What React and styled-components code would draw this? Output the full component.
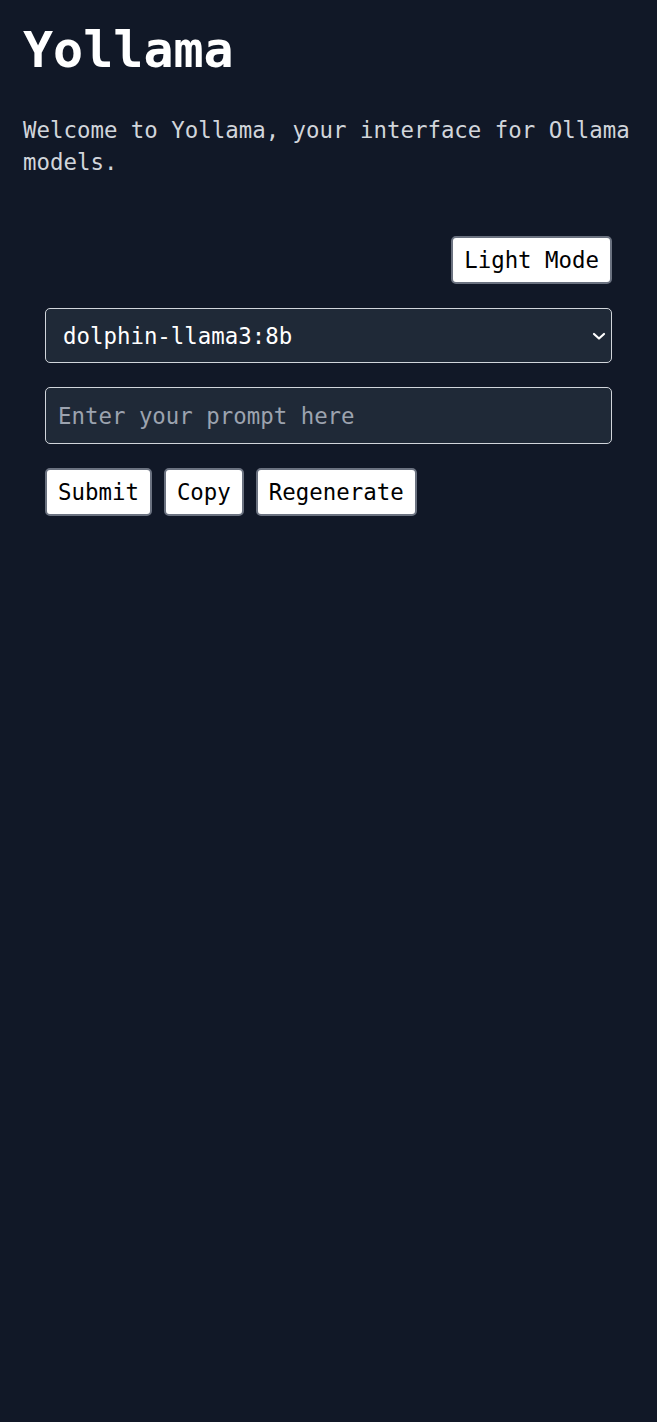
import styled, { createGlobalStyle } from "styled-components";
import { useState } from "react";

const GlobalStyle = createGlobalStyle`
  html, body {
    margin: 0;
    padding: 0;
    background-color: #111827;
  }
  body {
    font-family: 'DejaVu Sans Mono', 'Liberation Mono', monospace;
    color: #ffffff;
    min-height: 100vh;
  }
`;

const Page = styled.div`
  padding: 0 23px;
  min-height: 1422px;
  box-sizing: border-box;
`;

const Title = styled.h1`
  font-size: 50px;
  font-weight: bold;
  margin: 0;
  padding-top: 22px;
  line-height: 56px;
  color: #ffffff;
`;

const Intro = styled.p`
  font-size: 22.4px;
  line-height: 32px;
  color: #d1d5db;
  margin: 36px 0 0;
`;

const Panel = styled.div`
  display: flex;
  flex-direction: column;
  gap: 24px;
  margin: 58px 22px 0 22px;
`;

const TopBar = styled.div`
  display: flex;
  justify-content: flex-end;
`;

const Button = styled.button`
  font-family: 'DejaVu Sans Mono', 'Liberation Mono', monospace;
  font-size: 22.4px;
  height: 48px;
  padding: 0 11px;
  background-color: #ffffff;
  color: #000000;
  border: 2px solid #6b7280;
  border-radius: 5px;
  cursor: pointer;
`;

const SelectWrap = styled.div`
  position: relative;
`;

const Select = styled.select`
  appearance: none;
  width: 100%;
  height: 55px;
  box-sizing: border-box;
  padding: 0 40px 0 17px;
  font-family: 'DejaVu Sans Mono', 'Liberation Mono', monospace;
  font-size: 22.4px;
  color: #ffffff;
  background-color: #1f2937;
  border: 1px solid #d1d5db;
  border-radius: 5px;
`;

const Chevron = styled.svg`
  position: absolute;
  right: 4px;
  top: 50%;
  transform: translateY(-50%);
  pointer-events: none;
`;

const PromptInput = styled.input`
  width: 100%;
  height: 57px;
  box-sizing: border-box;
  padding: 0 12px;
  font-family: 'DejaVu Sans Mono', 'Liberation Mono', monospace;
  font-size: 22.4px;
  color: #ffffff;
  background-color: #1f2937;
  border: 1px solid #d1d5db;
  border-radius: 5px;

  &::placeholder {
    color: #9ca3af;
  }
`;

const Actions = styled.div`
  display: flex;
  gap: 12px;
`;

const App = () => {
  const [model, setModel] = useState("dolphin-llama3:8b");
  const [prompt, setPrompt] = useState("");

  return (
    <>
      <GlobalStyle />
      <Page>
        <Title>Yollama</Title>
        <Intro>Welcome to Yollama, your interface for Ollama models.</Intro>
        <Panel>
          <TopBar>
            <Button>Light Mode</Button>
          </TopBar>
          <SelectWrap>
            <Select value={model} onChange={(e) => setModel(e.target.value)}>
              <option value="dolphin-llama3:8b">dolphin-llama3:8b</option>
            </Select>
            <Chevron width="18" height="18" viewBox="0 0 18 18">
              <path d="M4 7 L9 11.5 L14 7" fill="none" stroke="#ffffff" strokeWidth="2.2" strokeLinecap="round" strokeLinejoin="round" />
            </Chevron>
          </SelectWrap>
          <PromptInput
            placeholder="Enter your prompt here"
            value={prompt}
            onChange={(e) => setPrompt(e.target.value)}
          />
          <Actions>
            <Button>Submit</Button>
            <Button>Copy</Button>
            <Button>Regenerate</Button>
          </Actions>
        </Panel>
      </Page>
    </>
  );
};

export default App;
